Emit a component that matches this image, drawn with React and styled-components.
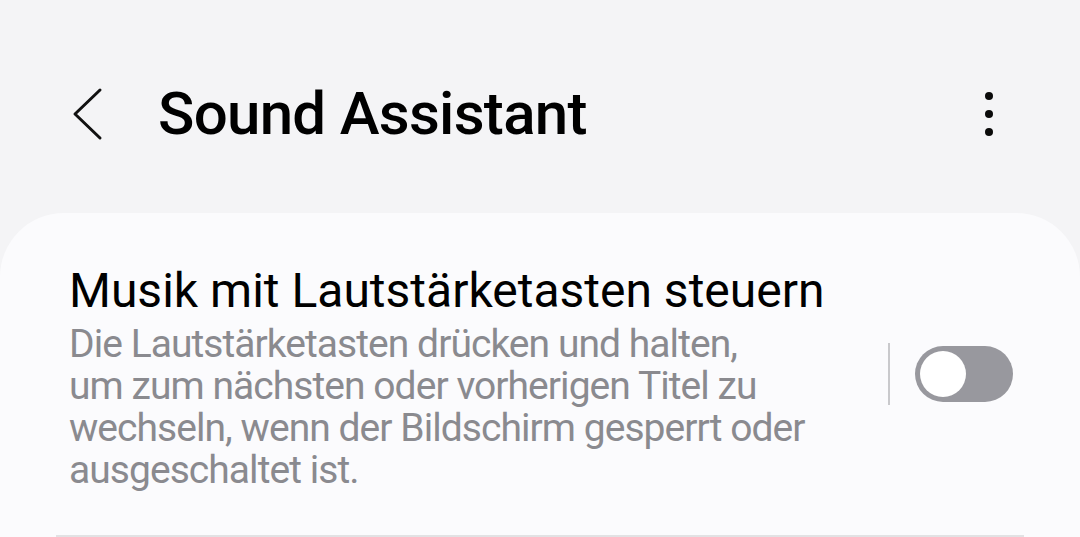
import React from 'react'
import styled, { createGlobalStyle } from 'styled-components'

const Global = createGlobalStyle`
  html, body {
    margin: 0;
    padding: 0;
    background: #f4f4f6;
    font-family: Roboto, "Noto Sans", sans-serif;
    overflow: hidden;
  }
`

const Page = styled.div`
  width: 1080px;
  height: 537px;
  display: flex;
  flex-direction: column;
`

const Header = styled.header`
  height: 213px;
  display: flex;
  align-items: flex-start;
  padding: 86px 71px 0 67px;
  box-sizing: border-box;
`

const BackButton = styled.button`
  width: 40px;
  height: 56px;
  padding: 0;
  border: none;
  background: none;
  display: flex;
  align-items: center;
  justify-content: center;
  margin-right: 51px;
`

const Title = styled.h1`
  flex: 1;
  margin: 0;
  font-size: 60px;
  font-weight: 500;
  letter-spacing: -0.7px;
  line-height: 56px;
  color: #000;
`

const MoreButton = styled.button`
  width: 40px;
  height: 56px;
  padding: 0;
  border: none;
  background: none;
  display: flex;
  flex-direction: column;
  align-items: center;
  justify-content: center;
  gap: 10px;
`

const Dot = styled.span`
  width: 8px;
  height: 8px;
  border-radius: 50%;
  background: #0a0a0a;
`

const Card = styled.section`
  flex: 1;
  background: #fbfbfd;
  border-radius: 64px 64px 0 0;
`

const Row = styled.div`
  display: flex;
  align-items: center;
  padding: 50px 67px 0 69px;
`

const Texts = styled.div`
  flex: 1;
`

const ItemTitle = styled.div`
  font-size: 48px;
  line-height: 56px;
  color: #000;
  margin-bottom: 4px;
`

const ItemDesc = styled.div`
  font-size: 39px;
  letter-spacing: -0.95px;
  line-height: 42px;
  color: #8a8a8f;
`

const Control = styled.div`
  display: flex;
  align-items: center;
  margin-bottom: 6px;
`

const Separator = styled.span`
  width: 2px;
  height: 62px;
  background: #c9c9cc;
  margin-right: 25px;
`

const Switch = styled.span`
  width: 98px;
  height: 56px;
  border-radius: 28px;
  background: #98989e;
  display: flex;
  align-items: center;
  padding: 0 5px;
  box-sizing: border-box;
`

const Thumb = styled.span`
  width: 46px;
  height: 46px;
  border-radius: 50%;
  background: #fff;
`

const Divider = styled.div`
  height: 2px;
  margin: 44px 56px 0 56px;
  background: #e2e2e4;
`

export default function App() {
  return (
    <Page>
      <Global />
      <Header>
        <BackButton aria-label="Zurück">
          <svg width="32" height="54" viewBox="0 0 32 54">
            <path d="M29 3 L4 27 L29 51" fill="none" stroke="#111" strokeWidth="3" strokeLinecap="round" strokeLinejoin="round" />
          </svg>
        </BackButton>
        <Title>Sound Assistant</Title>
        <MoreButton aria-label="Mehr">
          <Dot />
          <Dot />
          <Dot />
        </MoreButton>
      </Header>
      <Card>
        <Row>
          <Texts>
            <ItemTitle>Musik mit Lautstärketasten steuern</ItemTitle>
            <ItemDesc>
              Die Lautstärketasten drücken und halten,
              <br />
              um zum nächsten oder vorherigen Titel zu
              <br />
              wechseln, wenn der Bildschirm gesperrt oder
              <br />
              ausgeschaltet ist.
            </ItemDesc>
          </Texts>
          <Control>
            <Separator />
            <Switch>
              <Thumb />
            </Switch>
          </Control>
        </Row>
        <Divider />
      </Card>
    </Page>
  )
}
